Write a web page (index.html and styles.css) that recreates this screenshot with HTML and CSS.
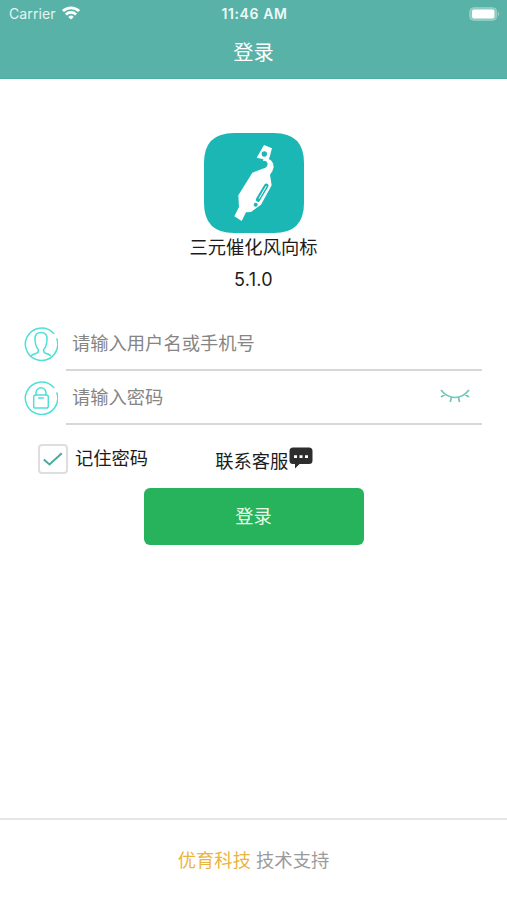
FILE: index.html
```html
<!DOCTYPE html>
<html lang="zh-CN">
<head>
<meta charset="utf-8">
<title>登录</title>
<link rel="stylesheet" href="styles.css">
</head>
<body>
<div class="screen">
  <header class="header">
    <div class="status">
      <div class="carrier">Carrier
        <svg class="wifi" viewBox="0 0 18 14" width="18" height="14"><g fill="none" stroke="#fff" stroke-width="2.8"><path d="M.9 5.1a11.6 11.6 0 0 1 16.2 0"/><path d="M3.9 8.500a7.300 7.300 0 0 1 10.2 0"/></g><path d="M9 13.600 6.300 10.900a3.900 3.900 0 0 1 5.400 0z" fill="#fff"/></svg>
      </div>
      <div class="time">11:46 AM</div>
      <svg class="battery" viewBox="0 0 31 14" width="31" height="14"><rect x=".7" y=".7" width="27" height="12.6" rx="4" fill="#8bcbc1" stroke="#98d1c8"/><rect x="3" y="2.5" width="22.4" height="9" rx="2" fill="#fff"/><path d="M29 4.5q2 2.500 0 5z" fill="#98d1c8"/></svg>
    </div>
    <h1 class="title">登录</h1>
  </header>
  <main class="main">
    <section class="brand">
      <svg class="logo" viewBox="60 23 300 300" width="100" height="100">
        <path d="M150 23H270Q360 23 360 113V233Q360 323 270 323H150Q60 323 60 233V113Q60 23 150 23z" fill="#1bb7b5"/>
        <path d="M240 59L264 69 257 95 254 101Q269 108 269 125 267 138 258 148L263 180 231 238 201 260 186 261 173 287 151 273 165 245 163 210 205 142 244 127Q253 122 250 112 246 105 237 107L238 102 218 97z" fill="#fff"/>
        <circle cx="241" cy="86" r="8" fill="#1bb7b5"/>
        <path d="M247 181l-25 42" fill="none" stroke="#1bb7b5" stroke-width="13" stroke-linecap="round"/>
        <path d="M247 182l-22 38" fill="none" stroke="#fff" stroke-width="3"/>
        <circle cx="215" cy="238" r="6" fill="#1bb7b5"/>
      </svg>
      <div class="name">三元催化风向标</div>
      <div class="version">5.1.0</div>
    </section>
    <form class="form">
      <div class="row">
        <svg class="icon" viewBox="0 0 34 34" width="34" height="34"><g fill="none" stroke="#4ee0d6" stroke-width="1.5" stroke-linecap="round" stroke-linejoin="round"><path d="M29.700 6.500A16.200 16.200 0 1 0 32.900 12"/><path d="M7.700 28.400Q9 27.200 12.500 26.200 15 25.300 14.300 22.500C11.200 19.500 11 14.800 11 11.600Q11 5.500 17 5.500T23 11.600C23 14.800 22.800 19.500 19.700 22.500Q19 25.300 21.500 26.200 25 27.200 26.300 28.400"/></g></svg>
        <div class="field">请输入用户名或手机号</div>
      </div>
      <div class="row">
        <svg class="icon" viewBox="0 0 34 34" width="34" height="34"><g fill="none" stroke="#4ee0d6" stroke-width="1.5" stroke-linecap="round" stroke-linejoin="round"><path d="M29.700 6.500A16.200 16.200 0 1 0 32.900 12"/><rect x="9.700" y="14" width="14.600" height="13" rx="1.800"/><path d="M12 14v-2.300a5 5 0 0 1 10 0V14M14.500 17h5"/></g></svg>
        <div class="field">请输入密码
          <svg class="eye" viewBox="0 0 30 16" width="30" height="16"><path d="M1 2Q7 9.500 15 9.500T29 2M5 6.500 1 9M11.500 9.500l-1.300 4.500M18.500 9.500l1 4.500M25 6.500 29 9" fill="none" stroke="#72c6b9" stroke-width="1.700"/></svg>
        </div>
      </div>
      <div class="options">
        <span class="checkbox"><svg viewBox="0 0 20 14" width="20" height="14"><path d="M.8 7.500 6.500 12.500 18.800 1.200" fill="none" stroke="#4ba99d" stroke-width="2"/></svg></span>
        <span class="remember">记住密码</span>
        <span class="contact">联系客服</span>
        <svg class="chat" viewBox="0 0 24 22" width="24" height="22"><path d="M4 .5h16q3.500 0 3.500 3.500v9.500q0 3.500-3.500 3.500h-9.500L6 21.500V17H4Q.5 17 .5 13.500V4Q.5.5 4 .5z" fill="#2d2d2d"/><path d="M5 8.300h3v2.800H5zM10.500 8.300h3v2.800h-3zM16 8.300h3v2.800h-3z" fill="#fff"/></svg>
      </div>
      <button class="submit" type="button">登录</button>
    </form>
  </main>
  <footer class="footer"><span class="company">优育科技</span> 技术支持</footer>
</div>
</body>
</html>
```
FILE: styles.css
```css
* { box-sizing: border-box; }
body {
  margin: 0;
  background: #fff;
  color: #1c1c1c;
  font-family: Inter, "Noto Sans CJK SC", sans-serif;
}
svg { display: block; flex: none; }
.screen { height: 900px; display: flex; flex-direction: column; }
.header { height: 79px; background: #58b2a7; border-bottom: 1px solid #4caea2; color: #fff; }
.status {
  height: 27px;
  padding: 0 7px 0 9px;
  display: grid;
  grid-template-columns: 1fr auto 1fr;
  align-items: center;
  font-size: 14px;
}
.carrier { display: flex; align-items: center; gap: 6px; color: #e5f5f2; letter-spacing: .1px; }
.wifi { margin-top: -2px; }
.time { font-size: 14px; font-weight: 600; letter-spacing: .6px; color: #edf9f7; }
.battery { justify-self: end; }
.title { margin: 0; line-height: 52px; font-size: 20.3px; font-weight: 400; text-align: center; }
.main { flex: 1; }
.brand { padding-top: 54px; display: flex; flex-direction: column; align-items: center; }
.name { margin-top: 1px; line-height: 26px; font-size: 18.3px; }
.version { margin-top: 7px; line-height: 26px; font-size: 18px; letter-spacing: .3px; }
.form { padding: 24px 25px 0; }
.row { display: flex; align-items: center; height: 54px; }
.icon { margin: 0 8px 0 -1px; }
.field {
  flex: 1;
  height: 54px;
  padding: 0 12px 2px 6px;
  display: flex;
  align-items: center;
  justify-content: space-between;
  border-bottom: 2px solid #d7d7d7;
  color: #858585;
  font-size: 18.3px;
}
.options { display: flex; height: 63px; padding: 19px 0 0 13px; align-items: flex-start; font-size: 18.3px; line-height: 28px; }
.checkbox { width: 30px; height: 30px; border: 2px solid #dedede; border-radius: 4px; display: flex; align-items: center; justify-content: center; }
.remember { margin-left: 7px; }
.contact { margin: 3px 0 0 67px; }
.chat { margin: 3px 0 0 1px; }
.submit {
  display: block;
  width: 220px;
  height: 57px;
  margin: 0 auto;
  padding: 0 0 3px;
  border: 0;
  border-radius: 6px;
  background: #27b35b;
  color: #e9fbe9;
  font: inherit;
  font-size: 18.3px;
}
.footer { height: 82px; border-top: 2px solid #e6e6e6; line-height: 80px; text-align: center; font-size: 18.3px; color: #9b9b9b; }
.company { color: #ebb440; }
```
